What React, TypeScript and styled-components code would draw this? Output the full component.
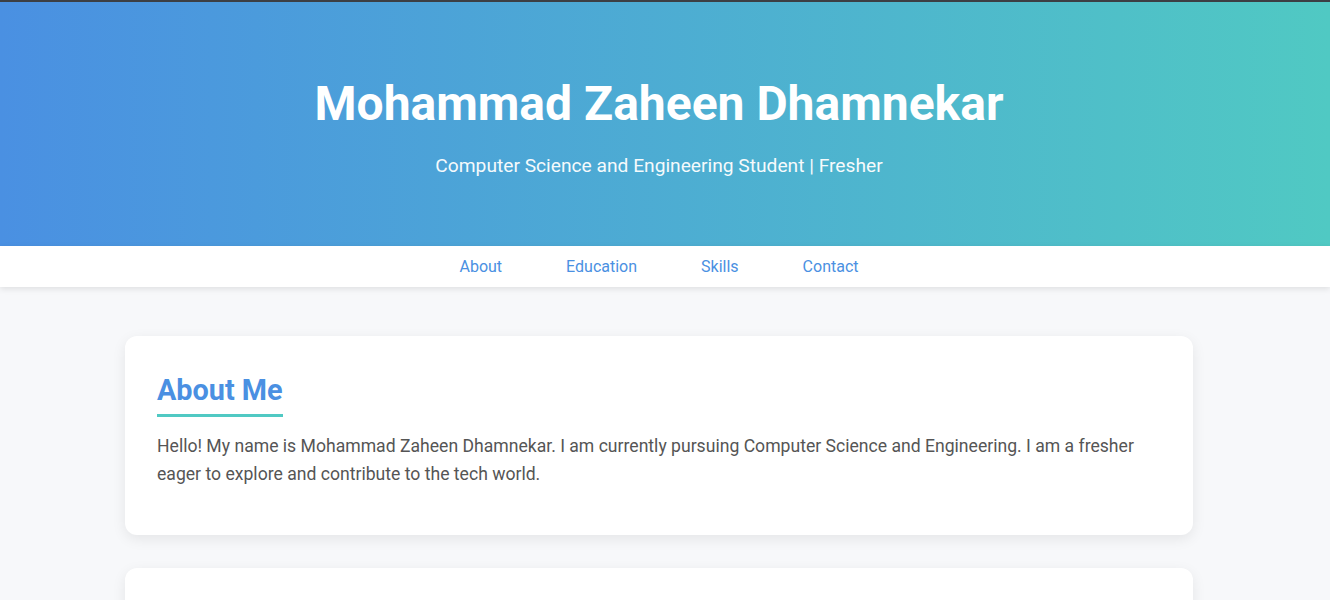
import React from "react";
import styled, { createGlobalStyle } from "styled-components";

const Global = createGlobalStyle`
  * { box-sizing: border-box; }
  html, body { margin: 0; padding: 0; }
  body {
    font-family: Roboto, "Liberation Sans", Arial, sans-serif;
    background: #f7f8fa;
    color: #555;
  }
`;

const Page = styled.div`
  border-top: 2px solid #3c3f44;
  min-height: 100vh;
`;

const Header = styled.header`
  background: linear-gradient(90deg, #4a90e2 0%, #50c9c3 100%);
  color: #fff;
  text-align: center;
  padding: 73px 32px 69px 20px;
`;

const Title = styled.h1`
  margin: 0 0 22px;
  font-size: 48px;
  font-weight: 700;
  line-height: 1.2;
`;

const Subtitle = styled.p`
  margin: 0;
  font-size: 19.2px;
  font-weight: 400;
  line-height: 22.5px;
  opacity: 0.95;
`;

const Nav = styled.nav`
  background: #fff;
  height: 41px;
  padding-right: 12px;
  display: flex;
  justify-content: center;
  align-items: center;
  box-shadow: 0 2px 6px rgba(0, 0, 0, 0.1);
  position: relative;
`;

const NavLink = styled.a`
  color: #4a90e2;
  text-decoration: none;
  font-size: 16px;
  margin: 0 32px;
`;

const MainWrap = styled.div`
  padding-right: 12px;
`;

const Main = styled.main`
  max-width: 1100px;
  margin: 0 auto;
  padding: 49px 16px;
  display: flex;
  flex-direction: column;
  gap: 33px;
`;

const Card = styled.section<{ $minHeight?: number }>`
  background: #fff;
  border-radius: 12px;
  padding: 36px 32px 47px;
  box-shadow: 0 4px 14px rgba(0, 0, 0, 0.08);
  min-height: ${(p) => (p.$minHeight ? `${p.$minHeight}px` : "auto")};
`;

const SectionTitle = styled.h2`
  display: inline-block;
  margin: 0 0 15px;
  color: #4a90e2;
  font-size: 28.8px;
  font-weight: 700;
  line-height: 1.3;
  padding-bottom: 4px;
  border-bottom: 3px solid #50c9c3;
`;

const Text = styled.p`
  margin: 0;
  font-size: 17.6px;
  line-height: 1.6;
  color: #555;
`;

export default function App() {
  return (
    <Page>
      <Global />
      <Header>
        <Title>Mohammad Zaheen Dhamnekar</Title>
        <Subtitle>Computer Science and Engineering Student | Fresher</Subtitle>
      </Header>
      <Nav>
        <NavLink href="#about">About</NavLink>
        <NavLink href="#education">Education</NavLink>
        <NavLink href="#skills">Skills</NavLink>
        <NavLink href="#contact">Contact</NavLink>
      </Nav>
      <MainWrap>
        <Main>
          <Card id="about">
            <SectionTitle>About Me</SectionTitle>
            <Text>
              Hello! My name is Mohammad Zaheen Dhamnekar. I am currently pursuing Computer Science and
              Engineering. I am a fresher eager to explore and contribute to the tech world.
            </Text>
          </Card>
          <Card id="education" $minHeight={200} />
        </Main>
      </MainWrap>
    </Page>
  );
}
